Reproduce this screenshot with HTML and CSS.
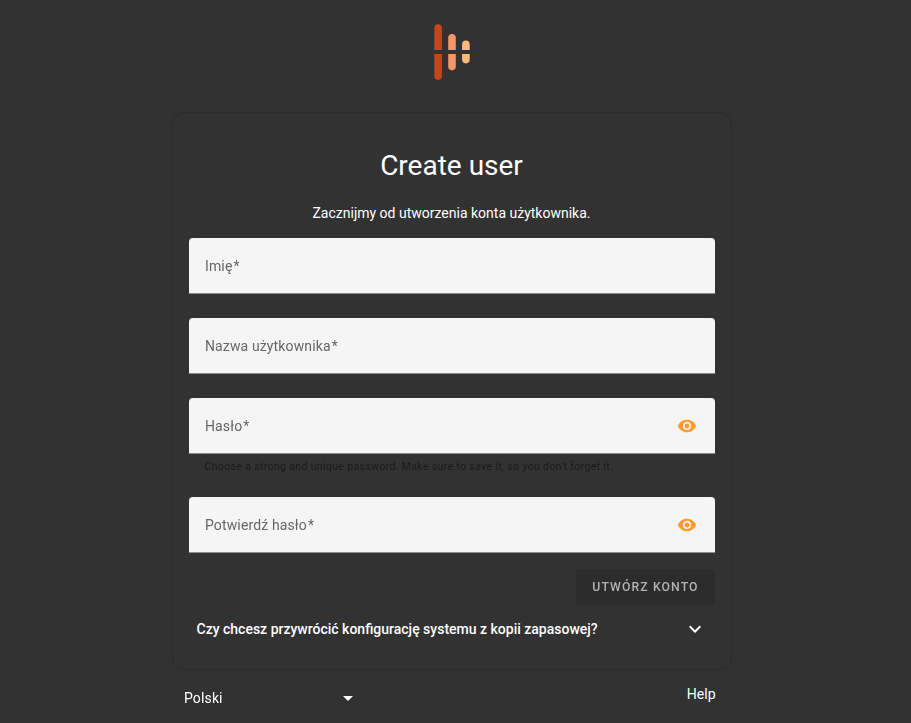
FILE: index.html
```
<!DOCTYPE html>
<html lang="pl">
<head>
<meta charset="utf-8">
<title>Create user</title>
<link rel="stylesheet" href="styles.css">
</head>
<body>
<div class="page">
  <svg class="logo" width="36" height="56" viewBox="0 0 36 56">
    <path fill="#c5461c" d="M.3 26V4.1a3.8 3.8 0 0 1 7.6 0V26zM.3 30h7.6v22.1a3.8 3.8 0 0 1-7.6 0z"/>
    <path fill="#f59569" d="M14.2 26V13.8a3.8 3.8 0 0 1 7.6 0V26zM14.2 30h7.6v12.6a3.8 3.8 0 0 1-7.6 0z"/>
    <path fill="#fdbb7b" d="M28.1 26v-5.6a3.8 3.8 0 0 1 7.6 0V26zM28.1 30h7.6v5.6a3.8 3.8 0 0 1-7.6 0z"/>
  </svg>
  <main class="card">
    <h1 class="title">Create user</h1>
    <p class="intro">Zacznijmy od utworzenia konta użytkownika.</p>
    <div class="field"><span class="label">Imię<span class="required">*</span></span></div>
    <div class="field"><span class="label">Nazwa użytkownika<span class="required">*</span></span></div>
    <div class="field"><span class="label">Hasło<span class="required">*</span></span>
      <svg class="eye" viewBox="0 0 24 24"><path d="M12 4.5C7 4.5 2.73 7.61 1 12c1.73 4.39 6 7.5 11 7.5s9.27-3.11 11-7.5c-1.73-4.39-6-7.5-11-7.5zM12 17c-2.76 0-5-2.24-5-5s2.24-5 5-5 5 2.24 5 5-2.24 5-5 5zm0-8c-1.66 0-3 1.34-3 3s1.34 3 3 3 3-1.34 3-3-1.34-3-3-3z"/></svg>
    </div>
    <p class="hint">Choose a strong and unique password. Make sure to save it, so you don't forget it.</p>
    <div class="field"><span class="label">Potwierdź hasło<span class="required">*</span></span>
      <svg class="eye" viewBox="0 0 24 24"><path d="M12 4.5C7 4.5 2.73 7.61 1 12c1.73 4.39 6 7.5 11 7.5s9.27-3.11 11-7.5c-1.73-4.39-6-7.5-11-7.5zM12 17c-2.76 0-5-2.24-5-5s2.24-5 5-5 5 2.24 5 5-2.24 5-5 5zm0-8c-1.66 0-3 1.34-3 3s1.34 3 3 3 3-1.34 3-3-1.34-3-3-3z"/></svg>
    </div>
    <div class="actions"><button class="submit" disabled>Utwórz konto</button></div>
    <div class="restore"><span>Czy chcesz przywrócić konfigurację systemu z kopii zapasowej?</span>
      <svg class="chevron" viewBox="0 0 24 24"><path d="M7.41 8.58 12 13.17l4.59-4.59L18 10l-6 6-6-6z"/></svg>
    </div>
  </main>
  <footer class="footer">
    <div class="language"><span>Polski</span><svg class="arrow" width="10" height="5" viewBox="0 0 10 5"><path d="M0 0h10L5 5z"/></svg></div>
    <a class="help">Help</a>
  </footer>
</div>
</body>
</html>
```
FILE: styles.css
```
* { box-sizing: border-box; }
body { margin: 0; height: 723px; overflow: hidden; background: #323232; color: #fff; font-family: Roboto, sans-serif; font-size: 14px; }
.page { width: 560px; margin-left: 171.5px; padding-top: 24px; }
.logo { display: block; margin: 0 0 32px 262.5px; }
.card { height: 558px; padding: 32px 16px 0; border: 1px solid #2c2c2c; border-radius: 12px; }
.title { margin: 0; font-size: 28px; font-weight: 400; line-height: 42px; text-align: center; }
.intro { margin: 16px 0 15px; line-height: 20px; text-align: center; }
.field { display: flex; align-items: center; justify-content: space-between; height: 56px; margin-bottom: 24px; padding: 0 16px; background: #f5f5f5; border-bottom: 1px solid #8c8c8c; border-radius: 4px 4px 0 0; }
.label { color: #666; letter-spacing: .13125px; will-change: transform; }
.required { margin-left: 1px; }
.eye { width: 20px; height: 20px; margin-right: 2px; fill: #ff9a33; }
.hint { margin: -19px 16px 23px; color: #1a1a1a; font-size: 10.5px; line-height: 15px; letter-spacing: .35px; white-space: nowrap; }
.actions { display: flex; justify-content: flex-end; margin-top: -8px; }
.submit { width: 139px; height: 36px; padding: 0; border: 0; border-radius: 4px; background: #2c2c2c; color: #b3b3b3; font: 500 12.25px Roboto, sans-serif; letter-spacing: 1.09375px; text-transform: uppercase; will-change: transform; }
.restore { display: flex; align-items: center; justify-content: space-between; height: 48px; padding: 0 8px; font-weight: 500; }
.chevron { width: 24px; height: 24px; fill: #fff; }
.footer { display: flex; justify-content: space-between; padding: 16px 16px 0 12px; line-height: 16px; }
.language { display: flex; align-items: center; justify-content: space-between; width: 169px; height: 24px; letter-spacing: .13125px; will-change: transform; }
.arrow { fill: #fff; }
.help { color: #fff; }
```
